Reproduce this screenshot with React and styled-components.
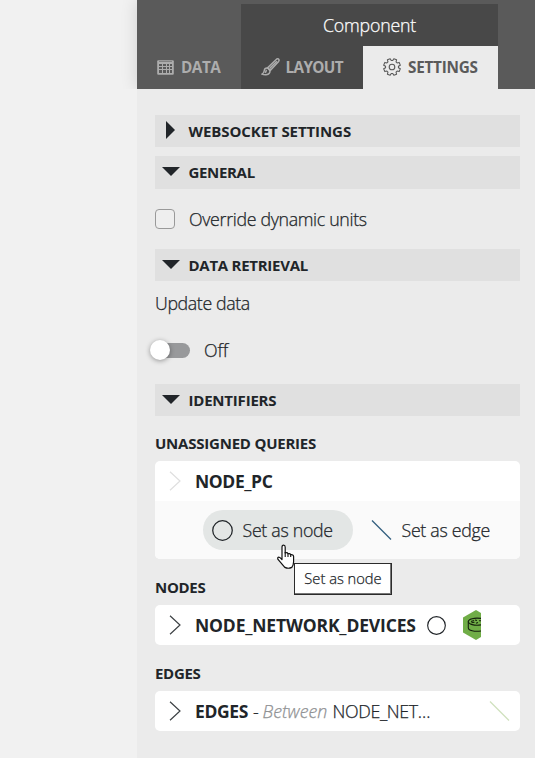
import React from "react";
import styled, { createGlobalStyle, css } from "styled-components";

const GlobalStyle = createGlobalStyle`
  *, *::before, *::after { box-sizing: border-box; }
  body {
    margin: 0;
    background: #f1f1f1;
    color: #212529;
    font-family: "Open Sans", "Noto Sans", sans-serif;
    overflow: hidden;
  }
  svg { display: block; flex: none; }
`;

const semilight = css`
  font-family: "Open Sans", "Noto Sans", sans-serif;
  font-size: 17.8px;
  font-weight: 300;
  -webkit-text-stroke: 0.25px currentColor;
`;

const Page = styled.div`
  display: flex;
  height: 758px;
  padding-left: 137px;
  position: relative;
`;

const Panel = styled.aside`
  width: 398px;
  height: 758px;
  background: #ebebeb;
`;

const Header = styled.header`
  display: flex;
  align-items: flex-end;
  height: 89px;
  background: #5a5a5a;
  box-shadow: 0 0 16px rgba(0, 0, 0, 0.14);
  clip-path: inset(0 0 0 -20px);
`;

const TabGroup = styled.div`
  width: 257px;
  height: 85px;
  background: #484848;
`;

const GroupTitle = styled.div`
  ${semilight}
  height: 42px;
  line-height: 43px;
  text-align: center;
  color: #fff;
  letter-spacing: -0.2px;
`;

const Tabs = styled.div`
  display: flex;
`;

const Tab = styled.div`
  display: flex;
  align-items: center;
  gap: ${(p) => p.$gap || 7}px;
  width: ${(p) => p.$width}px;
  height: 43px;
  padding: 0 0 1px 20px;
  background: ${(p) => (p.$active ? "#ebebeb" : "transparent")};
  color: ${(p) => (p.$active ? "#5a5a5a" : "#adadad")};
  font-size: 15.3px;
  font-weight: 700;
  letter-spacing: ${(p) => p.$spacing || 0}px;
  white-space: nowrap;
`;

const Content = styled.main`
  padding: 26px 15px 0 18px;
`;

const SectionBar = styled.div`
  display: flex;
  align-items: center;
  height: ${(p) => p.$height || 32}px;
  margin-top: ${(p) => p.$top || 0}px;
  padding: 0 0 ${(p) => (p.$height ? 1 : 0)}px 7px;
  background: #e0e0e0;
  font-size: 15px;
  font-weight: 700;
  letter-spacing: ${(p) => p.$spacing || 0}px;
`;

const Marker = styled.span`
  display: flex;
  justify-content: center;
  width: 18px;
  margin: 0 8.5px 3px 0;
`;

const OptionRow = styled.label`
  ${semilight}
  display: flex;
  align-items: center;
  height: 60px;
  padding-bottom: 1px;
  gap: 14px;
  letter-spacing: -0.33px;
`;

const CheckBox = styled.span`
  width: 20px;
  height: 20px;
  border: 1px solid #999;
  border-radius: 4px;
  background: #eee;
`;

const FieldLabel = styled.div`
  ${semilight}
  height: 46px;
  line-height: 45px;
  letter-spacing: -0.38px;
`;

const SwitchRow = styled.div`
  ${semilight}
  display: flex;
  align-items: center;
  height: 46px;
  gap: 14px;
`;

const Track = styled.span`
  display: flex;
  align-items: center;
  width: 35px;
  height: 15px;
  border-radius: 8px;
  background: #98999b;
`;

const Thumb = styled.span`
  flex: none;
  width: 20px;
  height: 20px;
  margin-left: -5px;
  border-radius: 50%;
  background: #fff;
  box-shadow: 0 1px 5px rgba(0, 0, 0, 0.38);
`;

const GroupLabel = styled.h3`
  height: ${(p) => p.$height}px;
  margin: 0;
  padding-top: ${(p) => p.$top}px;
  font-size: 15px;
  line-height: 20px;
  font-weight: 700;
  letter-spacing: ${(p) => p.$spacing || 0}px;
`;

const Card = styled.section`
  border-radius: 5px;
  background: #fff;
  overflow: hidden;
`;

const CardHead = styled.div`
  display: flex;
  align-items: center;
  height: 40px;
  padding-left: 14px;
  font-size: 17.5px;
  white-space: nowrap;
`;

const Name = styled.strong`
  margin-left: 14px;
  font-weight: 700;
  letter-spacing: ${(p) => p.$spacing || 0}px;
`;

const Relation = styled.span`
  ${semilight}
  margin-left: 5px;
  letter-spacing: -0.35px;

  em {
    margin: 0 1px 0 0;
    color: #909294;
    letter-spacing: 0;
  }
`;

const Actions = styled.div`
  display: flex;
  gap: 9px;
  height: 58px;
  padding: 9px 0 0 48px;
  background: #fafafa;
`;

const Action = styled.button`
  ${semilight}
  display: flex;
  align-items: center;
  gap: 9.5px;
  width: 150px;
  height: 40px;
  padding: 0 0 0 9px;
  border: 0;
  border-radius: 20px;
  background: ${(p) => (p.$hover ? "#e3e6e5" : "transparent")};
  color: #212529;
  letter-spacing: -0.3px;
  white-space: nowrap;
`;

const NodeShape = styled.span`
  margin-left: 11px;
`;

const DeviceIcon = styled.span`
  margin-left: 17px;
`;

const EdgeSample = styled.span`
  margin: 0 10px 0 auto;
`;

const Tooltip = styled.div`
  ${semilight}
  position: absolute;
  left: 294px;
  top: 563px;
  width: 98px;
  height: 32px;
  border: 1px solid #2b2b2b;
  box-shadow: inset -1px -1px #777;
  background: #fff;
  font-size: 14.7px;
  line-height: 29px;
  text-align: center;
`;

const Pointer = styled.svg`
  position: absolute;
  left: 276px;
  top: 544px;
`;

const TableIcon = () => (
  <svg width="17" height="15" viewBox="0 0 17 15">
    <rect x="0.2" y="0.2" width="16.6" height="14.6" rx="1" fill="#adadad" />
    <path
      fill="#5a5a5a"
      d="M2 1.4h13v.7H2zM2 4h3v2H2zM6 4h3v2H6zM10 4h2v2h-2zM13 4h2v2h-2zM2 7h3v2H2zM6 7h3v2H6zM10 7h2v2h-2zM13 7h2v2h-2zM2 10h3v3H2zM6 10h3v3H6zM10 10h2v3h-2zM13 10h2v3h-2z"
    />
  </svg>
);

const BrushIcon = () => (
  <svg width="19" height="18" viewBox="0 0 19 18" fill="none" stroke="#adadad" strokeWidth="1.5" strokeLinejoin="round">
    <path d="M6.6 9.7 15.5 1.2q1.3-.9 2.2 0 .8 1-.1 2.2L9.5 12.3z" />
    <path d="m8.7 10.4 7.2-7.2" />
    <path d="M5.9 10.1c-1.7 0-2.5 1.2-2.7 2.7-.2 1.8-.8 2.7-2.3 3.3 2.6 1.2 6.2.9 7.4-.8.8-1.1.9-2.2.2-3.3s-1.5-1.9-2.6-1.9z" />
    <path d="M5.7 12.2c-.9.7-.7 1.7-1.5 2.7" />
  </svg>
);

const gearPath = (() => {
  const points = [];
  for (let i = 0; i < 8; i += 1) {
    [
      [-16, 6.5],
      [-10, 8.5],
      [10, 8.5],
      [16, 6.5],
    ].forEach(([offset, radius]) => {
      const angle = ((i * 45 + 22.5 + offset) * Math.PI) / 180;
      points.push(`${(9 + radius * Math.cos(angle)).toFixed(2)} ${(9 + radius * Math.sin(angle)).toFixed(2)}`);
    });
  }
  return `M${points.join("L")}Z`;
})();

const GearIcon = () => (
  <svg width="18" height="18" viewBox="0 0 18 18" fill="none" stroke="#5a5a5a" strokeWidth="1.1" strokeLinejoin="round">
    <path d={gearPath} />
    <circle cx="9" cy="9" r="2.8" />
  </svg>
);

const Chevron = ({ color = "#3d4245" }) => (
  <svg width="12" height="20" viewBox="0 0 12 20" fill="none" stroke={color} strokeWidth="1.2">
    <path d="m1 .7 10 9.3L1 19.3" />
  </svg>
);

const Circle = ({ size }) => (
  <svg width={size} height={size} viewBox="0 0 20 20" fill="none" stroke="#212529" strokeWidth="1.2">
    <circle cx="10" cy="10" r="9.3" />
  </svg>
);

const Line = ({ color }) => (
  <svg width="21" height="20" viewBox="0 0 21 20" fill="none" stroke={color} strokeWidth="1.3">
    <path d="m1 .5 19 19" />
  </svg>
);

const HexDevice = () => (
  <svg width="18" height="30" viewBox="0 0 18 30">
    <path d="M13 0 0 7.5v15L13 30l5-3V3z" fill="#70ad47" />
    <g fill="none" stroke="#15200d" strokeWidth="1.1">
      <path d="M18 8.4c-7-.9-12.7.6-12.7 3.2 0 2.7 6 4.2 12.7 3.3" />
      <path d="M5.3 11.6v6.1c0 2.8 6 4.2 12.7 3.3" />
      <path d="m8 11.5 3-1M12 10l2 .5M8.5 12.8l3-.5M13 13.3l2-.8M16 10.7h2" />
    </g>
  </svg>
);

const Section = ({ title, open, ...bar }) => (
  <SectionBar {...bar}>
    <Marker>
      <svg width="18" height="18" viewBox="0 0 18 18" fill="#212529">
        <path d={open ? "M0 5h18L9 14z" : "M4 0v18l9-9z"} />
      </svg>
    </Marker>
    {title}
  </SectionBar>
);

export default function App() {
  return (
    <Page>
      <GlobalStyle />
      <Panel>
        <Header>
          <Tab $width={104} $spacing={-0.5}>
            <TableIcon />
            DATA
          </Tab>
          <TabGroup>
            <GroupTitle>Component</GroupTitle>
            <Tabs>
              <Tab $width={122} $gap={5.5} $spacing={-0.65}>
                <BrushIcon />
                LAYOUT
              </Tab>
              <Tab $width={135} $active $spacing={-0.25}>
                <GearIcon />
                SETTINGS
              </Tab>
            </Tabs>
          </TabGroup>
        </Header>
        <Content>
          <Section title="WEBSOCKET SETTINGS" $spacing={-0.08} />
          <Section title="GENERAL" open $top={9} $height={33} $spacing={-0.33} />
          <OptionRow>
            <CheckBox />
            Override dynamic units
          </OptionRow>
          <Section title="DATA RETRIEVAL" open $spacing={-0.27} />
          <FieldLabel>Update data</FieldLabel>
          <SwitchRow>
            <Track>
              <Thumb />
            </Track>
            Off
          </SwitchRow>
          <Section title="IDENTIFIERS" open $top={11} $spacing={-0.2} />
          <GroupLabel $height={45} $top={17} $spacing={-0.22}>UNASSIGNED QUERIES</GroupLabel>
          <Card>
            <CardHead>
              <Chevron color="#dfdfdf" />
              <Name $spacing={-0.4}>NODE_PC</Name>
            </CardHead>
            <Actions>
              <Action $hover>
                <Circle size={21} />
                Set as node
              </Action>
              <Action>
                <Line color="#2f5c7c" />
                Set as edge
              </Action>
            </Actions>
          </Card>
          <GroupLabel $height={46} $top={18} $spacing={-0.3}>NODES</GroupLabel>
          <Card>
            <CardHead>
              <Chevron />
              <Name $spacing={-0.16}>NODE_NETWORK_DEVICES</Name>
              <NodeShape>
                <Circle size={19} />
              </NodeShape>
              <DeviceIcon>
                <HexDevice />
              </DeviceIcon>
            </CardHead>
          </Card>
          <GroupLabel $height={46} $top={18} $spacing={-0.3}>EDGES</GroupLabel>
          <Card>
            <CardHead>
              <Chevron />
              <Name $spacing={-0.4}>EDGES</Name>
              <Relation>
                - <em>Between</em> NODE_NET…
              </Relation>
              <EdgeSample>
                <Line color="#cfe0bd" />
              </EdgeSample>
            </CardHead>
          </Card>
        </Content>
      </Panel>
      <Tooltip>Set as node</Tooltip>
      <Pointer width="20" height="25" viewBox="0 0 20 25">
        <path
          d="M6 14V3.2q0-2 1.6-2t1.6 2V9q2.2-.8 2.8.8 2-.7 2.7.9 2.7-.4 2.9 1.8v5.2q0 3-1.8 5.7-3.5 1.7-7 0Q5.7 19.8 2 15.4q-.8-1.8.6-2.3 1-.4 3.4 2.4z"
          fill="#fff"
          stroke="#111"
          strokeWidth="1.2"
          strokeLinejoin="round"
        />
        <path d="M9.2 8v5M12 9.8V13M14.7 10.7V13" stroke="#111" strokeWidth="1.1" />
      </Pointer>
    </Page>
  );
}
